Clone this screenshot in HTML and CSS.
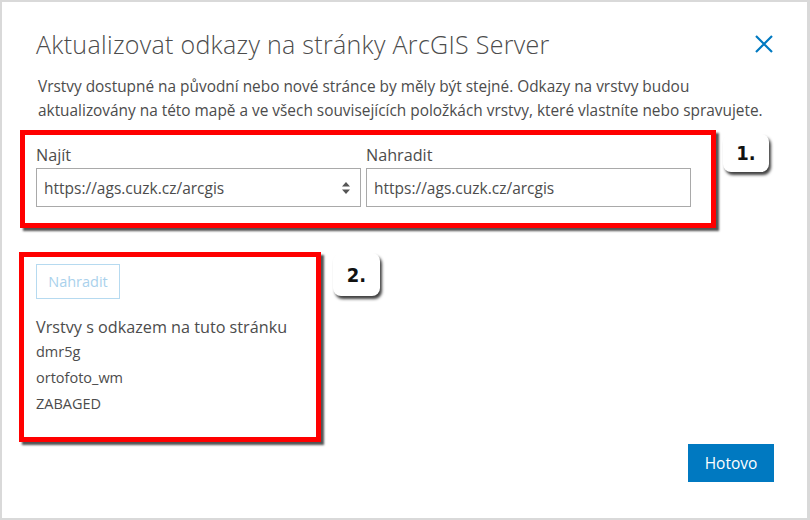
FILE: index.html
```html
<!DOCTYPE html>
<html lang="cs">
<head>
  <meta charset="UTF-8">
  <meta name="viewport" content="width=device-width, initial-scale=1">
  <title>Aktualizovat odkazy</title>
  <link rel="stylesheet" href="styles.css">
</head>
<body>
  <div class="dialog">
    <header class="dialog-head">
      <h1>Aktualizovat odkazy na stránky ArcGIS Server</h1>
      <button class="close-btn" aria-label="Zavřít">
        <svg width="18" height="18" viewBox="0 0 18 18">
          <path d="M1 1 L17 17 M17 1 L1 17" stroke="#0079c1" stroke-width="2.2" fill="none"/>
        </svg>
      </button>
    </header>

    <p class="intro">Vrstvy dostupné na původní nebo nové stránce by měly být stejné. Odkazy na vrstvy budou<br>aktualizovány na této mapě a ve všech souvisejících položkách vrstvy, které vlastníte nebo spravujete.</p>

    <div class="step">
      <div class="callout callout-urls">
        <div class="field">
          <label>Najít</label>
          <div class="select">
            <span>https://ags.cuzk.cz/arcgis</span>
            <svg width="8" height="12" viewBox="0 0 8 12">
              <path d="M4 0 L8 4.5 L0 4.5 Z M0 7.5 L8 7.5 L4 12 Z" fill="#555"/>
            </svg>
          </div>
        </div>
        <div class="field">
          <label>Nahradit</label>
          <input class="text-input" type="text" value="https://ags.cuzk.cz/arcgis">
        </div>
      </div>
      <span class="badge badge-one">1.</span>
    </div>

    <div class="step step-layers">
      <div class="callout callout-layers">
        <button class="btn-outline" disabled>Nahradit</button>
        <h2>Vrstvy s odkazem na tuto stránku</h2>
        <ul class="layer-list">
          <li>dmr5g</li>
          <li>ortofoto_wm</li>
          <li>ZABAGED</li>
        </ul>
      </div>
      <span class="badge badge-two">2.</span>
    </div>

    <footer class="dialog-foot">
      <button class="btn-primary">Hotovo</button>
    </footer>
  </div>
</body>
</html>
```

FILE: styles.css
```css
:root {
  --text: #4c4c4c;
  --blue: #0079c1;
  --line: #a9a9a9;
  --mark: #ff0000;
}

* {
  box-sizing: border-box;
  font-family: 'Open Sans', 'Noto Sans', sans-serif;
}

body {
  margin: 0;
  background: #ffffff;
}

.dialog {
  height: 520px;
  display: flex;
  flex-direction: column;
  border: 2px solid #d9d9d9;
  border-right-width: 3px;
  padding: 26px 33px 36px 34px;
  color: var(--text);
}

.dialog-head {
  display: flex;
  justify-content: space-between;
  align-items: center;
}

.dialog-head h1 {
  margin: 0;
  font-size: 25px;
  letter-spacing: 0.3px;
  line-height: 32px;
  font-weight: 300;
  color: var(--text);
}

.close-btn {
  background: none;
  border: none;
  padding: 0;
  margin-right: 1px;
  display: flex;
  cursor: pointer;
}

.intro {
  margin: 15px 0 0 2px;
  font-size: 15.4px;
  line-height: 24px;
  white-space: nowrap;
}

/* red annotation frames */
.step {
  display: flex;
  align-items: flex-start;
  margin-top: 7px;
  margin-left: -16px;
}

.step-layers {
  margin-top: 24px;
  margin-left: -17px;
}

.callout {
  border: 5px solid var(--mark);
  box-shadow: 3px 3px 2px rgba(40, 40, 40, 0.8);
  background: #fff;
}

.callout-urls {
  width: 696px;
  display: grid;
  grid-template-columns: 325px 325px;
  column-gap: 5px;
  padding: 8px 11px 16px;
}

.field label {
  display: block;
  font-size: 16.2px;
  line-height: 24px;
  margin-bottom: 1px;
}

.select,
.text-input {
  height: 39px;
  border: 1px solid var(--line);
  font-size: 15.5px;
  color: var(--text);
  padding: 0 10px 0 7px;
}

.select {
  display: flex;
  align-items: center;
  justify-content: space-between;
}

.text-input {
  width: 100%;
  outline: none;
}

.badge {
  display: flex;
  align-items: center;
  justify-content: center;
  width: 46px;
  height: 38px;
  background: #fff;
  border-radius: 8px;
  box-shadow: 2px 3px 3px rgba(0, 0, 0, 0.75);
  font-family: 'Liberation Sans Narrow', 'DejaVu Sans Condensed', sans-serif;
  font-weight: 700;
  font-size: 20px;
  color: #111;
}

.badge-one {
  margin: 4px 0 0 7px;
}

.badge-two {
  width: 47px;
  height: 43px;
  margin: 1px 0 0 12px;
}

.callout-layers {
  width: 302px;
  padding: 7px 12px 20px;
}

.btn-outline {
  display: block;
  width: 84px;
  height: 35px;
  background: #fff;
  border: 1px solid #b6daf0;
  color: #a9d1ec;
  font-size: 14.5px;
  padding: 0;
}

.callout-layers h2 {
  margin: 16px 0 0;
  font-size: 16.2px;
  line-height: 24px;
  font-weight: 400;
}

.layer-list {
  list-style: none;
  margin: 0;
  padding: 0;
}

.layer-list li {
  font-size: 14.5px;
  line-height: 26px;
}

.dialog-foot {
  margin-top: auto;
  display: flex;
  justify-content: flex-end;
}

.btn-primary {
  width: 86px;
  height: 38px;
  background: var(--blue);
  color: #fff;
  border: none;
  font-size: 15.5px;
  cursor: pointer;
}
```
